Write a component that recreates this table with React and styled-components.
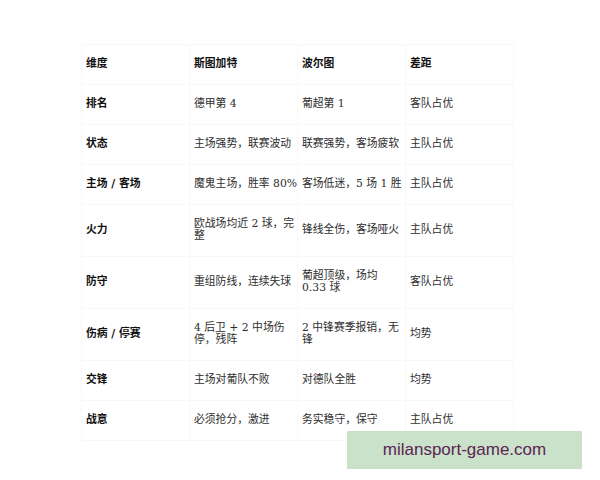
import * as React from "react"
import styled, { createGlobalStyle } from "styled-components"

const GlobalStyle = createGlobalStyle`
    html, body {
        margin: 0;
        padding: 0;
        background: #ffffff;
    }
`

const Page = styled.div`
    position: relative;
    width: 600px;
    height: 480px;
    padding: 44px 0 0 81px;
    box-sizing: border-box;
    font-family: "DejaVu Serif", "Noto Sans CJK SC", serif;
    overflow: hidden;
`

const Table = styled.table`
    border-collapse: collapse;
    table-layout: fixed;
    width: 432px;
`

const Cell = styled.td`
    box-sizing: border-box;
    width: 108px;
    padding: 13px 0 14px 4px;
    font-size: 10.8px;
    line-height: 12px;
    color: ${p => (p.$bold ? "#111111" : "#2e2e2e")};
    font-weight: ${p => (p.$bold ? 700 : 400)};
    border: 1px solid #f8f8f8;
    vertical-align: middle;
    text-align: left;
`

const Watermark = styled.div`
    position: absolute;
    left: 347px;
    top: 431px;
    width: 235px;
    height: 38px;
    background: #c9e2c9;
    color: #5c2455;
    font-family: "Liberation Sans", Arial, sans-serif;
    font-size: 17px;
    display: flex;
    align-items: center;
    justify-content: center;
`

const header = ["维度", "斯图加特", "波尔图", "差距"]

const rows = [
    ["排名", "德甲第 4", "葡超第 1", "客队占优"],
    ["状态", "主场强势，联赛波动", "联赛强势，客场疲软", "主队占优"],
    ["主场 / 客场", "魔鬼主场，胜率 80%", "客场低迷，5 场 1 胜", "主队占优"],
    ["火力", "欧战场均近 2 球，完整", "锋线全伤，客场哑火", "主队占优"],
    ["防守", "重组防线，连续失球", "葡超顶级，场均 0.33 球", "客队占优"],
    ["伤病 / 停赛", "4 后卫 + 2 中场伤停，残阵", "2 中锋赛季报销，无锋", "均势"],
    ["交锋", "主场对葡队不败", "对德队全胜", "均势"],
    ["战意", "必须抢分，激进", "务实稳守，保守", "主队占优"],
]

const App = () => (
    <Page>
        <GlobalStyle />
        <Table>
            <tbody>
                <tr>
                    {header.map(h => (
                        <Cell key={h} $bold>{h}</Cell>
                    ))}
                </tr>
                {rows.map(r => (
                    <tr key={r[0]}>
                        {r.map((c, i) => (
                            <Cell key={i} $bold={i === 0}>{c}</Cell>
                        ))}
                    </tr>
                ))}
            </tbody>
        </Table>
        <Watermark>milansport-game.com</Watermark>
    </Page>
)

export default App
